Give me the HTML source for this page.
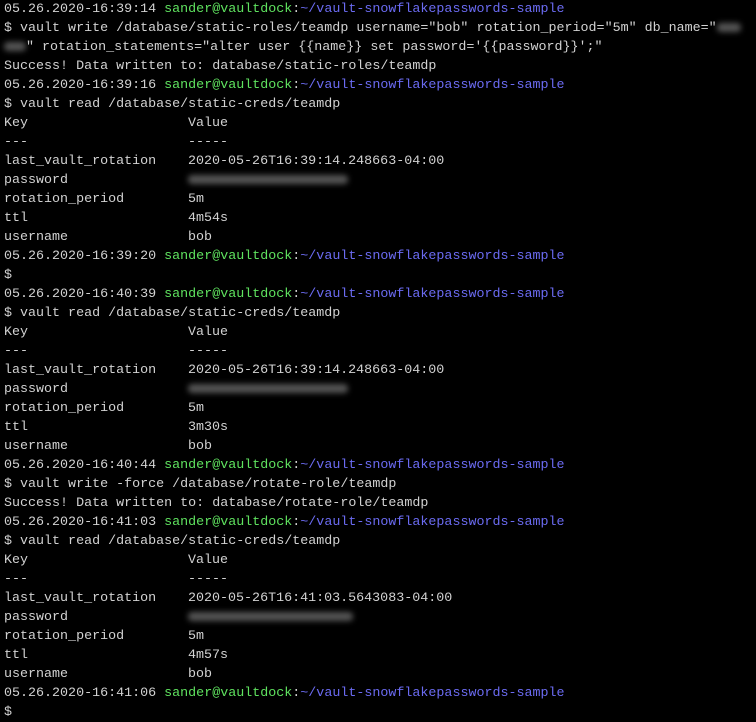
<!DOCTYPE html>
<html><head><meta charset="utf-8"><style>
html,body{margin:0;padding:0;background:#000;width:756px;height:721px;overflow:hidden}
pre{margin:0;position:absolute;left:4px;top:0px;font-family:"Liberation Mono",monospace;font-size:13.35px;line-height:19px;color:#d2d2d2;white-space:pre}
.g{color:#5fe25f}.b{color:#6b6bf2}
.bl{display:inline-block;height:9px;background:#555;filter:blur(3px);vertical-align:middle;border-radius:4px}
.k{display:inline-block;width:184px}
</style></head><body><pre>05.26.2020-16:39:14 <span class="g">sander@vaultdock</span>:<span class="b">~/vault-snowflakepasswords-sample</span>
$ vault write /database/static-roles/teamdp username="bob" rotation_period="5m" db_name="<span class="bl" style="width:24px"></span>
<span class="bl" style="width:22px"></span>" rotation_statements="alter user {{name}} set password='{{password}}';"
Success! Data written to: database/static-roles/teamdp
05.26.2020-16:39:16 <span class="g">sander@vaultdock</span>:<span class="b">~/vault-snowflakepasswords-sample</span>
$ vault read /database/static-creds/teamdp
<span class="k">Key</span>Value
<span class="k">---</span>-----
<span class="k">last_vault_rotation</span>2020-05-26T16:39:14.248663-04:00
<span class="k">password</span><span class="bl" style="width:160px"></span>
<span class="k">rotation_period</span>5m
<span class="k">ttl</span>4m54s
<span class="k">username</span>bob
05.26.2020-16:39:20 <span class="g">sander@vaultdock</span>:<span class="b">~/vault-snowflakepasswords-sample</span>
$
05.26.2020-16:40:39 <span class="g">sander@vaultdock</span>:<span class="b">~/vault-snowflakepasswords-sample</span>
$ vault read /database/static-creds/teamdp
<span class="k">Key</span>Value
<span class="k">---</span>-----
<span class="k">last_vault_rotation</span>2020-05-26T16:39:14.248663-04:00
<span class="k">password</span><span class="bl" style="width:160px"></span>
<span class="k">rotation_period</span>5m
<span class="k">ttl</span>3m30s
<span class="k">username</span>bob
05.26.2020-16:40:44 <span class="g">sander@vaultdock</span>:<span class="b">~/vault-snowflakepasswords-sample</span>
$ vault write -force /database/rotate-role/teamdp
Success! Data written to: database/rotate-role/teamdp
05.26.2020-16:41:03 <span class="g">sander@vaultdock</span>:<span class="b">~/vault-snowflakepasswords-sample</span>
$ vault read /database/static-creds/teamdp
<span class="k">Key</span>Value
<span class="k">---</span>-----
<span class="k">last_vault_rotation</span>2020-05-26T16:41:03.5643083-04:00
<span class="k">password</span><span class="bl" style="width:165px"></span>
<span class="k">rotation_period</span>5m
<span class="k">ttl</span>4m57s
<span class="k">username</span>bob
05.26.2020-16:41:06 <span class="g">sander@vaultdock</span>:<span class="b">~/vault-snowflakepasswords-sample</span>
$
</pre></body></html>
